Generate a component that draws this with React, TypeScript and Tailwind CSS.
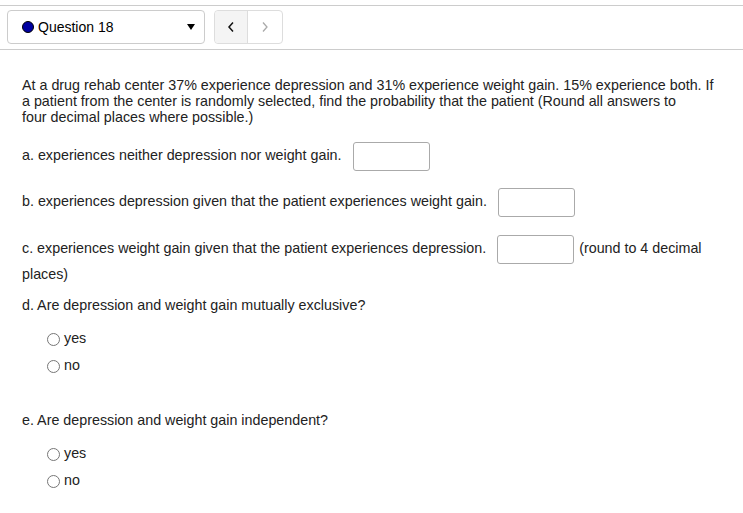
import React from "react";

function Radio({ label }: { label: string }) {
  return (
    <label className="flex items-center gap-[4px] h-[20px]">
      <span className="w-[13px] h-[13px] rounded-full border border-[#767676] bg-white" />
      <span>{label}</span>
    </label>
  );
}

function Box() {
  return (
    <span className="inline-block w-[77px] h-[29px] align-middle rounded-[3px] border border-[#aaa] bg-white ml-[11px] mr-[5px]" />
  );
}

export default function App() {
  return (
    <div className="min-h-[513px] bg-white text-[#222] text-[14.3px] font-['Liberation_Sans',Arial,sans-serif]">
      {/* question nav */}
      <div className="mt-[5px] border-t border-b border-[#ccc] pt-[4px] pb-[5px] px-[7px] flex items-center gap-[9px] text-[14px]">
        <div className="w-[198px] h-[34px] rounded-[4px] border border-[#ccc] flex items-center pl-[14px] pr-[9px]">
          <span className="w-[12px] h-[12px] rounded-full bg-[#0000a0] border border-black" />
          <span className="ml-[4px] text-black">Question 18</span>
          <span className="ml-auto w-0 h-0 border-l-[4px] border-r-[4px] border-t-[6px] border-l-transparent border-r-transparent border-t-black" />
        </div>
        <div className="flex h-[34px] rounded-[4px] border border-[#ddd]">
          <button className="w-[33px] flex items-center justify-center bg-[#f4f4f4] border-r border-[#ddd] rounded-l-[4px]">
            <svg width="8" height="12" viewBox="0 0 8 12">
              <path d="M6 1.5 L2 6 L6 10.5" fill="none" stroke="#111" strokeWidth="1.5" />
            </svg>
          </button>
          <button className="w-[34px] flex items-center justify-center">
            <svg width="8" height="12" viewBox="0 0 8 12">
              <path d="M2 1.5 L6 6 L2 10.5" fill="none" stroke="#aaa" strokeWidth="1.3" />
            </svg>
          </button>
        </div>
      </div>

      <div className="px-[22px]">
        <p className="mt-[27px] leading-[16px] whitespace-nowrap">
          At a drug rehab center 37% experience depression and 31% experience weight gain. 15% experience both. If
          <br />
          a patient from the center is randomly selected, find the probability that the patient (Round all answers to
          <br />
          four decimal places where possible.)
        </p>

        <p className="mt-[17px] leading-[22px]">
          a. experiences neither depression nor weight gain.
          <Box />
        </p>
        <p className="mt-[17px] leading-[22px]">
          b. experiences depression given that the patient experiences weight gain.
          <Box />
        </p>
        <p className="mt-[18px] leading-[20px]">
          <span>c. experiences weight gain given that the patient experiences depression.</span>
          <Box />
          <span>(round to 4 decimal</span>
          <br />
          <span>places)</span>
        </p>

        <p className="mt-[10px] leading-[22px]">d. Are depression and weight gain mutually exclusive?</p>
        <div className="mt-[13px] pl-[25px] flex flex-col gap-[7px]">
          <Radio label="yes" />
          <Radio label="no" />
        </div>

        <p className="mt-[33px] leading-[22px]">e. Are depression and weight gain independent?</p>
        <div className="mt-[13px] pl-[25px] flex flex-col gap-[7px]">
          <Radio label="yes" />
          <Radio label="no" />
        </div>
      </div>
    </div>
  );
}
